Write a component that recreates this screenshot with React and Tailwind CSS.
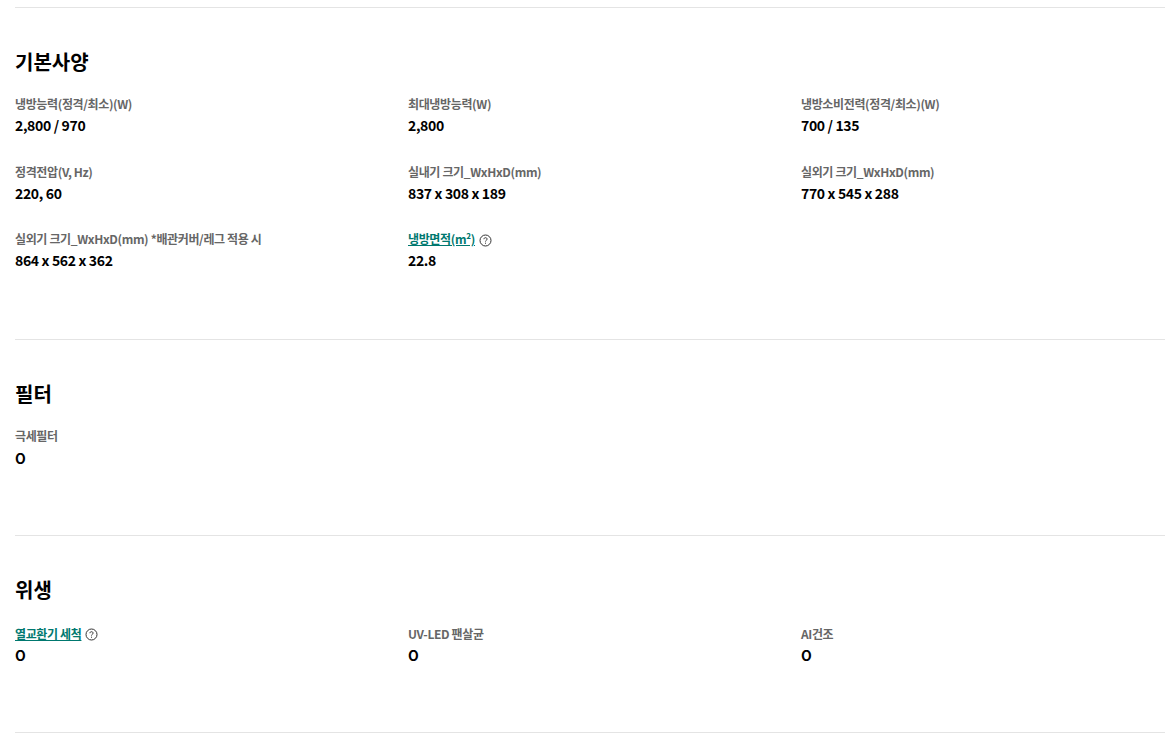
const groups = [
  {
    title: "기본사양",
    gridClass: "mt-[16px] pb-[41px]",
    labelClass: "h-[18px]",
    items: [
      { label: "냉방능력(정격/최소)(W)", value: "2,800 / 970" },
      { label: "최대냉방능력(W)", value: "2,800" },
      { label: "냉방소비전력(정격/최소)(W)", value: "700 / 135" },
      { label: "정격전압(V, Hz)", value: "220, 60" },
      { label: "실내기 크기_WxHxD(mm)", value: "837 x 308 x 189" },
      { label: "실외기 크기_WxHxD(mm)", value: "770 x 545 x 288" },
      { label: "실외기 크기_WxHxD(mm) *배관커버/레그 적용 시", value: "864 x 562 x 362" },
      { label: "냉방면적(m²)", value: "22.8", link: true },
    ],
  },
  {
    title: "필터",
    gridClass: "mt-[15.5px] pb-[41.5px]",
    labelClass: "h-[19.5px]",
    items: [{ label: "극세필터", value: "O" }],
  },
  {
    title: "위생",
    gridClass: "mt-[17.5px] pb-[39.5px]",
    labelClass: "h-[18.5px]",
    items: [
      { label: "열교환기 세척", value: "O", link: true },
      { label: "UV-LED 팬살균", value: "O" },
      { label: "AI건조", value: "O" },
    ],
  },
];

function HelpIcon() {
  return (
    <svg width="13" height="13" viewBox="0 0 13 13" fill="none" className="ml-[4px] mt-[2px] shrink-0">
      <circle cx="6.5" cy="6.5" r="5.5" stroke="#333" strokeWidth="1" />
      <path d="M4.9 5.2c0-.9.7-1.5 1.6-1.5s1.6.6 1.6 1.4c0 1.2-1.6 1.2-1.6 2.4" stroke="#333" strokeWidth="1" />
      <rect x="6" y="8.7" width="1" height="1" fill="#333" />
    </svg>
  );
}

function SpecItem({ item, labelClass }) {
  return (
    <div className="h-[67.5px]">
      <div className={`flex items-center ${labelClass} text-[12px] font-bold tracking-[-0.03em] text-[#666]`}>
        {item.link ? (
          <>
            <span className="text-[#00786f] underline">{item.label}</span>
            <HelpIcon />
          </>
        ) : (
          item.label
        )}
      </div>
      <div className="h-[24px] leading-[24px] text-[14px] font-bold tracking-[-0.025em] text-black">{item.value}</div>
    </div>
  );
}

export default function App() {
  return (
    <div
      className="w-[1169px] h-[738px] overflow-hidden bg-white pl-[15px] pr-[4px] pt-[7px]"
      style={{ fontFamily: '"Noto Sans CJK KR", "Noto Sans", sans-serif' }}
    >
      {groups.map((g) => (
        <section key={g.title} className="border-t border-[#e4e4e4] pt-[37px]">
          <h2 className="h-[34px] leading-[34px] text-[20px] font-bold text-black">{g.title}</h2>
          <div className={`grid grid-cols-[393px_393px_1fr] ${g.gridClass}`}>
            {g.items.map((it) => (
              <SpecItem key={it.label + it.value} item={it} labelClass={g.labelClass} />
            ))}
          </div>
        </section>
      ))}
      <div className="border-t border-[#e4e4e4]" />
    </div>
  );
}
